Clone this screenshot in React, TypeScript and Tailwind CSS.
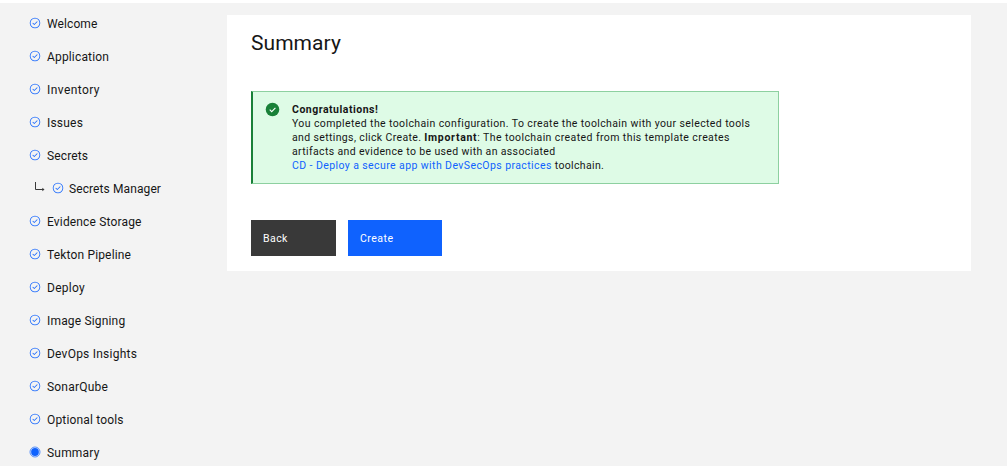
import React from "react";

type Step = { label: string; tracking: string; nested?: boolean; current?: boolean };

const steps: Step[] = [
  { label: "Welcome", tracking: "tracking-[0.1px]" },
  { label: "Application", tracking: "tracking-[0.16px]" },
  { label: "Inventory", tracking: "tracking-[0.42px]" },
  { label: "Issues", tracking: "tracking-[0.2px]" },
  { label: "Secrets", tracking: "tracking-[0.12px]" },
  { label: "Secrets Manager", tracking: "tracking-[0.1px]", nested: true },
  { label: "Evidence Storage", tracking: "tracking-[0.16px]" },
  { label: "Tekton Pipeline", tracking: "tracking-[0.16px]" },
  { label: "Deploy", tracking: "tracking-[0.25px]" },
  { label: "Image Signing", tracking: "tracking-[0.17px]" },
  { label: "DevOps Insights", tracking: "tracking-[0.23px]" },
  { label: "SonarQube", tracking: "tracking-[0.2px]" },
  { label: "Optional tools", tracking: "tracking-[0.17px]" },
  { label: "Summary", tracking: "tracking-[0.2px]", current: true },
];

function CheckOutline() {
  return (
    <svg className="mb-px size-3 shrink-0 text-[#0f62fe]" viewBox="0 0 16 16" fill="currentColor">
      <path d="M8 1a7 7 0 1 0 0 14A7 7 0 0 0 8 1zm0 13A6 6 0 1 1 8 2a6 6 0 0 1 0 12z" />
      <path d="M7 10.8 4.5 8.3l.8-.8L7 9.2l3.7-3.7.8.8z" />
    </svg>
  );
}

function CurrentDot() {
  return (
    <svg className="mb-px size-3 shrink-0" viewBox="0 0 12 12">
      <circle cx="6" cy="6" r="5" fill="none" stroke="#0f62fe" strokeWidth=".7" />
      <circle cx="6" cy="6" r="3.9" fill="#0f62fe" />
    </svg>
  );
}

function NestedArrow() {
  return (
    <svg className="mr-[6px] mb-px ml-[5px] h-3 w-3 shrink-0" viewBox="0 0 12 12" fill="none" stroke="#393939">
      <path d="M1.5 0v7.5h8" />
      <path d="M8.3 5.8 10.5 7.5 8.3 9.2z" fill="#393939" stroke="none" />
    </svg>
  );
}

export default function App() {
  return (
    <div className="h-[466px] w-[1007px] overflow-hidden bg-white pt-[3px] font-['Roboto','Liberation_Sans',sans-serif] text-[#161616]">
      <div className="flex h-[463px] items-start bg-[#f3f3f3]">
        <nav className="w-[227px] shrink-0 pt-1 pl-[29px]">
          <ul>
            {steps.map((step) => (
              <li key={step.label} className="flex h-[33px] items-center">
                {step.nested && <NestedArrow />}
                {step.current ? <CurrentDot /> : <CheckOutline />}
                <span className={`${step.nested ? "ml-[5px]" : "ml-[6px]"} whitespace-nowrap text-[12px] ${step.tracking}`}>{step.label}</span>
              </li>
            ))}
          </ul>
        </nav>
        <main className="mt-3 h-[256px] w-[744px] bg-white px-6 pt-4">
          <h1 className="h-[60px] text-[21px] leading-6">
            <span className="tracking-[0.05px]">Summary</span>
          </h1>
          <section className="flex h-[93px] w-[528px] border border-l-2 border-[#8dd0a0] border-l-[#198038] bg-[#defbe6]">
            <svg className="mt-[10px] ml-3 size-[15px] shrink-0" viewBox="0 0 15 15">
              <circle cx="7.5" cy="7.5" r="6.8" fill="#198038" />
              <path d="m4.7 7.6 2 2 3.7-3.8" fill="none" stroke="#fff" strokeWidth="1.1" />
            </svg>
            <div className="mt-[11px] ml-3 text-[10.5px] leading-[14px] whitespace-nowrap">
              <p><span className="font-bold tracking-[0.51px]">Congratulations!</span></p>
              <p><span className="tracking-[0.39px]">You completed the toolchain configuration. To create the toolchain with your selected tools</span></p>
              <p>
                <span className="tracking-[0.36px]">and settings, click Create. </span>
                <span className="font-bold tracking-[0.7px]">Important</span>
                <span className="tracking-[0.41px]">: The toolchain created from this template creates</span>
              </p>
              <p><span className="tracking-[0.36px]">artifacts and evidence to be used with an associated</span></p>
              <p>
                <a className="tracking-[0.41px] text-[#0f62fe]">CD - Deploy a secure app with DevSecOps practices</a>
                <span className="tracking-[0.35px]"> toolchain.</span>
              </p>
            </div>
          </section>
          <div className="mt-9 flex gap-3 text-[10.5px] text-white">
            <button className="h-9 w-[85px] bg-[#393939] pt-px pl-3 text-left"><span className="tracking-[0.45px]">Back</span></button>
            <button className="h-9 w-[94px] bg-[#0f62fe] pt-px pl-3 text-left"><span className="tracking-[0.5px]">Create</span></button>
          </div>
        </main>
      </div>
    </div>
  );
}
